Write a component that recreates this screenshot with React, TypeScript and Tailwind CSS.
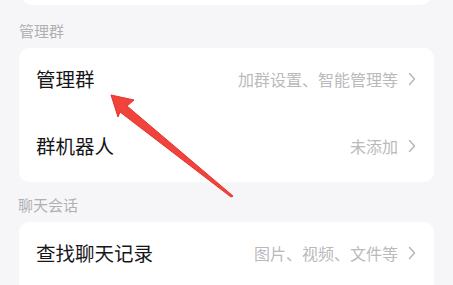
import React from "react";

const font = { fontFamily: '"Noto Sans CJK SC", "Noto Sans", sans-serif' };

function Chevron() {
  return (
    <svg width="8" height="14" viewBox="0 0 8 14" className="ml-[10px]">
      <path d="M1.5 1.5 L6.5 7 L1.5 12.5" fill="none" stroke="#b4b4b4" strokeWidth="1.4" strokeLinecap="round" strokeLinejoin="round" />
    </svg>
  );
}

function Row({ title, hint }: { title: string; hint: string }) {
  return (
    <div className="flex h-[67px] items-center justify-between pb-[6px] pl-[17px] pr-[18px]">
      <span className="text-[19.5px] text-[#161618]">{title}</span>
      <span className="flex items-center text-[16px] text-[#bababc]">
        {hint}
        <Chevron />
      </span>
    </div>
  );
}

export default function App() {
  return (
    <div className="relative h-[285px] w-[453px] overflow-hidden bg-[#f6f6f8]" style={font}>
      <div className="mx-[22px] -mt-[10px] h-[15px] rounded-b-[10px] bg-white" />
      <div className="px-[19px] pt-[16px] pb-[7px] text-[15px] leading-[20px] text-[#b0b0b4]">管理群</div>
      <div className="mx-[19px] rounded-[10px] bg-white">
        <Row title="管理群" hint="加群设置、智能管理等" />
        <Row title="群机器人" hint="未添加" />
      </div>
      <div className="px-[18px] pt-[13px] pb-[7px] text-[15px] leading-[20px] text-[#b0b0b4]">聊天会话</div>
      <div className="mx-[19px] h-[80px] rounded-[10px] bg-white">
        <Row title="查找聊天记录" hint="图片、视频、文件等" />
      </div>

      <svg className="pointer-events-none absolute left-0 top-0" width="453" height="285" viewBox="0 0 453 285">
        <path
          d="M111 95 L134 100 L127 106 L233 196 L231 197 L120 112 L118 117 Z"
          fill="#f0433c"
          stroke="#e8332c"
          strokeWidth="1"
          strokeLinejoin="round"
        />
      </svg>
    </div>
  );
}
